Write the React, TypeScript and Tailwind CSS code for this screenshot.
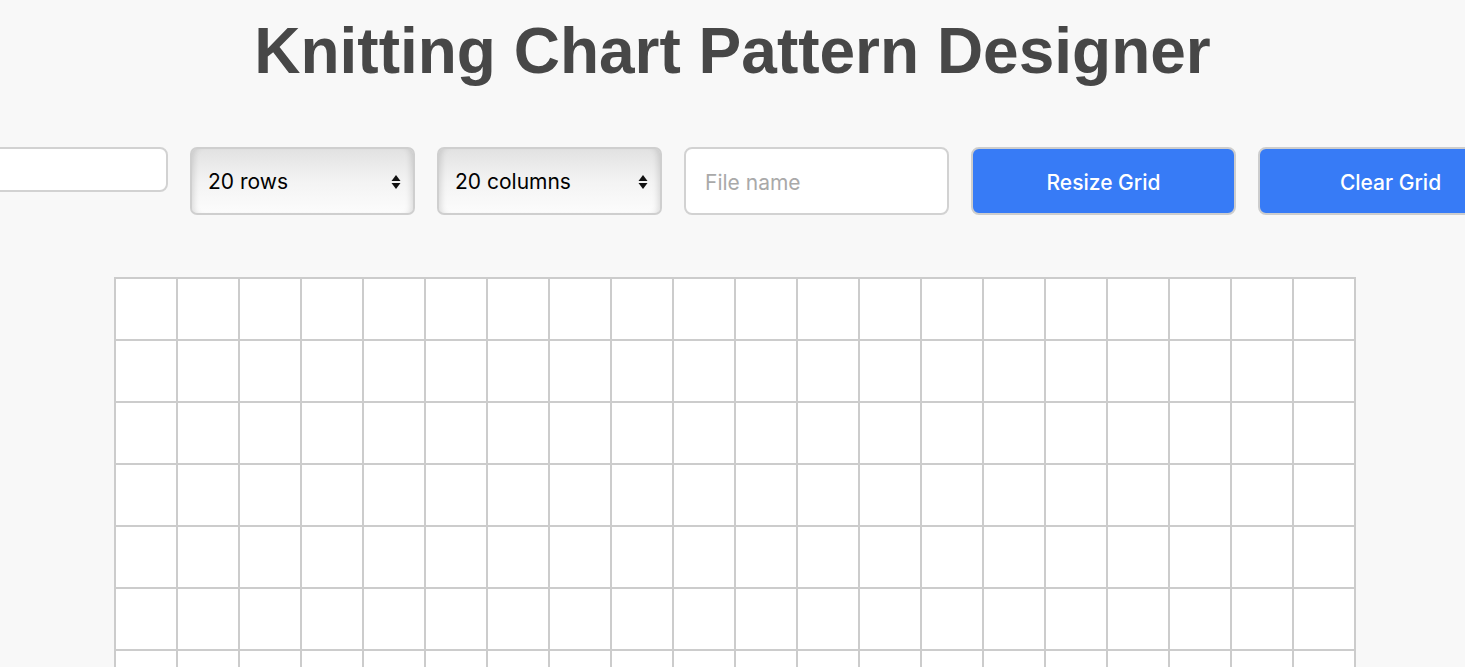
const ROWS = 20;
const COLS = 20;

function Arrows() {
  return (
    <svg width="10" height="20" viewBox="0 0 10 20" className="shrink-0">
      <path d="M5 3 L9.5 9 H0.5 Z" fill="#111" />
      <path d="M5 17 L9.5 11 H0.5 Z" fill="#111" />
    </svg>
  );
}

function FakeSelect({ label }: { label: string }) {
  return (
    <div className="w-[225px] h-[68px] shrink-0 flex items-center justify-between pl-[16px] pr-[12px] pt-[2px] rounded-[7px] border-2 border-[#cfcfcf] bg-gradient-to-b from-[#e2e2e2] via-[#f3f3f3] to-[#fcfcfc] shadow-[inset_7px_0_6px_-5px_rgba(0,0,0,0.13),inset_-7px_0_6px_-5px_rgba(0,0,0,0.13)] text-[21px] text-black font-['Inter',sans-serif]">
      <span>{label}</span>
      <Arrows />
    </div>
  );
}

export default function App() {
  return (
    <div className="min-h-screen bg-[#f8f8f8] overflow-hidden font-['Liberation_Sans',Arial,sans-serif]">
      <h1 className="text-center text-[64px] font-bold leading-none text-[#474747] pt-[19px]">
        Knitting Chart Pattern Designer
      </h1>

      <div className="flex justify-center items-start gap-[22px] mt-[64px]">
        <input
          className="w-[226px] h-[45px] shrink-0 rounded-[8px] border-2 border-[#d2d2d2] bg-white outline-none"
          type="text"
        />
        <FakeSelect label="20 rows" />
        <FakeSelect label="20 columns" />
        <input
          className="w-[265px] h-[68px] shrink-0 rounded-[8px] border-2 border-[#d2d2d2] bg-white px-[19px] pt-[3px] text-[21px] font-['Inter',sans-serif] outline-none placeholder:text-[#a9a9a9]"
          placeholder="File name"
          type="text"
        />
        <button className="w-[265px] h-[68px] shrink-0 rounded-[8px] border-2 border-[#cdcdcd] bg-[#377bf6] pt-[3px] text-white text-[21px] font-medium font-['Inter',sans-serif]">
          Resize Grid
        </button>
        <button className="w-[265px] h-[68px] shrink-0 rounded-[8px] border-2 border-[#cdcdcd] bg-[#377bf6] pt-[3px] text-white text-[21px] font-medium font-['Inter',sans-serif]">
          Clear Grid
        </button>
      </div>

      <div className="flex justify-center pl-[5px] mt-[62px]">
        <div className="grid grid-cols-[repeat(20,62px)] border border-[#cccccc] bg-white">
          {Array.from({ length: ROWS * COLS }).map((_, i) => (
            <div key={i} className="w-[62px] h-[62px] border border-[#cccccc]" />
          ))}
        </div>
      </div>
    </div>
  );
}
